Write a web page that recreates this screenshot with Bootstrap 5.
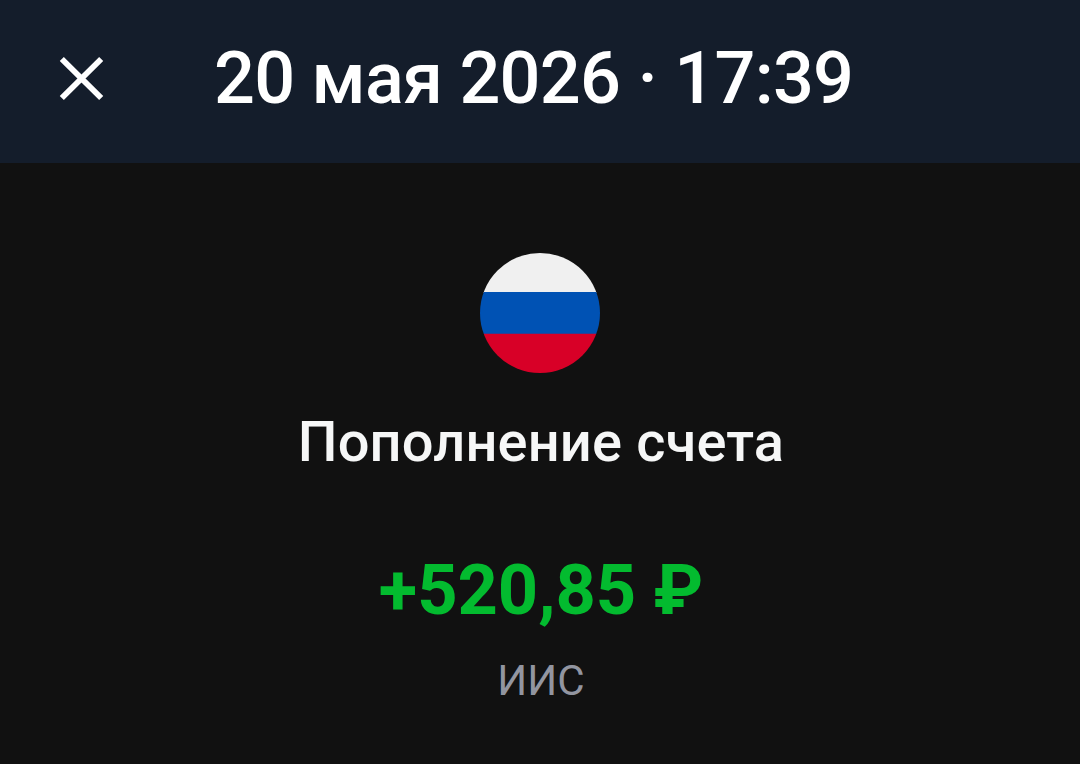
<!DOCTYPE html>
<html lang="ru">
<head>
<meta charset="utf-8">
<meta name="viewport" content="width=device-width, initial-scale=1">
<title>Пополнение счета</title>
<link href="https://cdn.jsdelivr.net/npm/bootstrap@5.3.0/dist/css/bootstrap.min.css" rel="stylesheet">
<style>
body{background:#111;color:#f6f7f7;font-family:Roboto,sans-serif;height:764px;overflow:hidden}
.top-bar{background:#141d2b;height:163px;padding:0 0 0 59px}
.close-btn{width:45px;height:45px;margin-top:56px;color:#fff}
.top-title{font-size:72px;line-height:84px;font-weight:500;letter-spacing:-.72px;margin:37px 0 0 110px;color:#fff}
.flag{width:120px;height:120px;margin-top:90px}
.op-title{font-size:56px;line-height:66px;font-weight:500;letter-spacing:.15px;margin:36px 0 0 2px}
.amount{font-size:70.4px;line-height:84px;font-weight:700;letter-spacing:-.05px;color:#03bb2f;margin:73px 0 0 2px}
.account{font-size:42px;line-height:52px;color:#9295a0;margin:23px 0 0 2px}
</style>
</head>
<body class="d-flex flex-column">
<header class="top-bar d-flex align-items-start flex-shrink-0">
<button class="close-btn btn p-0 border-0 d-flex" aria-label="Закрыть"><svg width="45" height="45" viewBox="0 0 45 45" fill="none" stroke="currentColor" stroke-width="5.8"><path d="M2.8 3 42.2 42M42.2 3 2.8 42"/></svg></button>
<h1 class="top-title text-nowrap">20 мая 2026 · 17:39</h1>
</header>
<main class="d-flex flex-column align-items-center flex-grow-1">
<svg class="flag flex-shrink-0" viewBox="0 0 120 120"><defs><clipPath id="disc"><circle cx="60" cy="60" r="60"/></clipPath></defs><g clip-path="url(#disc)"><path fill="#f0f0f0" d="M0 0h120v40H0z"/><path fill="#0052b4" d="M0 39h120v42H0z"/><path fill="#d80027" d="M0 80.8h120v39.2H0z"/></g></svg>
<h2 class="op-title mb-0">Пополнение счета</h2>
<div class="amount text-nowrap">+520,85 ₽</div>
<div class="account">ИИС</div>
</main>
<script src="https://cdn.jsdelivr.net/npm/bootstrap@5.3.0/dist/js/bootstrap.bundle.min.js"></script>
</body>
</html>
